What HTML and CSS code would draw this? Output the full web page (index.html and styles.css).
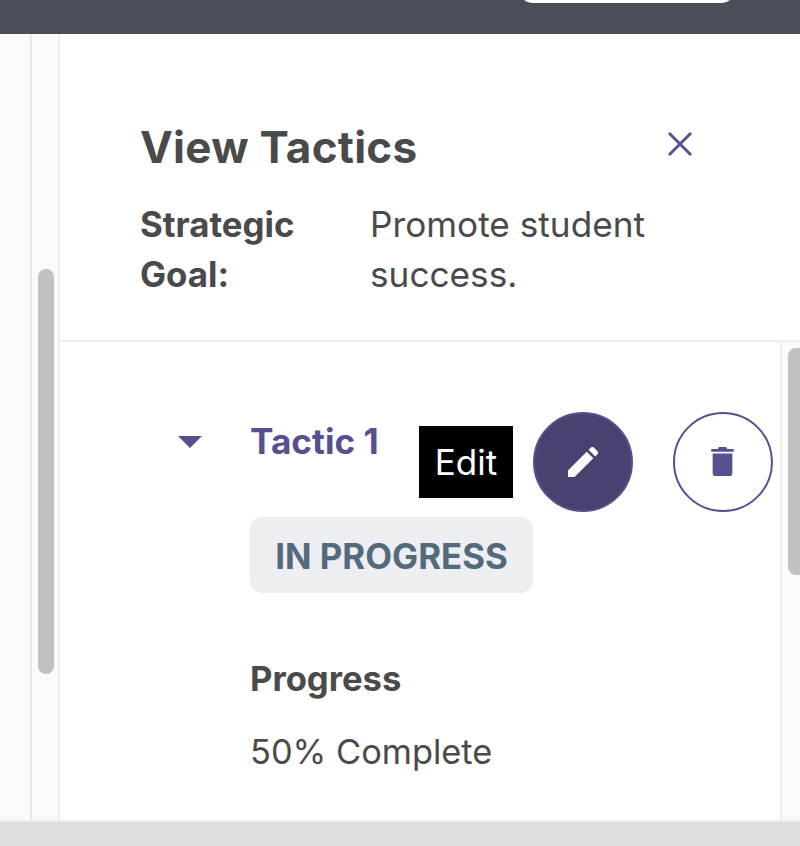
FILE: index.html
```html
<!DOCTYPE html>
<html lang="en">
<head>
<meta charset="UTF-8" />
<title>View Tactics</title>
<link rel="stylesheet" href="styles.css">
</head>
<body>
<div class="topbar"><div class="search"></div></div>
<div class="main">
    <div class="gutter"></div>
    <div class="track track-left"><div class="thumb thumb-left"></div></div>
    <div class="panel">
        <div class="panel-head">
            <div class="title-row">
                <h1>View Tactics</h1>
                <svg class="close" width="26" height="26" viewBox="0 0 26 26"><path d="M2 2 L24 24 M24 2 L2 24" /></svg>
            </div>
            <div class="goal">
                <b>Strategic Goal:</b>
                <span>Promote student success.</span>
            </div>
        </div>
        <div class="panel-body">
            <div class="content">
                <div class="tactic-row">
                    <div class="caret"></div>
                    <h2>Tactic 1</h2>
                    <div class="actions">
                        <button class="round solid">
                            <span class="tip">Edit</span>
                            <svg width="30" height="30" viewBox="0 0 32 32"><path d="M0 25 L20 5 L27 12 L7 32 L0 32 Z M22 3 L25 0 Q26 -0.500 27 0 L32 5 Q32.500 6 32 7 L29 10 Z" /></svg>
                        </button>
                        <button class="round outline">
                            <svg class="trash" width="23" height="30" viewBox="0 0 24 32"><path d="M8 0 H16 L17 2 H24 V5 H0 V2 H7 Z M1.500 7 H22.500 V28 Q22.500 31 19.500 31 H4.500 Q1.500 31 1.500 28 Z" /></svg>
                        </button>
                    </div>
                </div>
                <div class="status">IN PROGRESS</div>
                <h3>Progress</h3>
                <p>50% Complete</p>
            </div>
            <div class="track track-right"><div class="thumb thumb-right"></div></div>
        </div>
    </div>
</div>
<div class="bottombar"></div>
</body>
</html>
```
FILE: styles.css
```css
*{margin:0;padding:0;box-sizing:border-box;}
html,body{height:100%;}
body{display:flex;flex-direction:column;height:846px;overflow:hidden;font-family:Inter,"Liberation Sans",sans-serif;color:#4a4a4a;background:#fff;}
.topbar{height:34px;flex:none;background:#4a4e59;padding-left:520px;overflow:hidden;}
.search{width:214px;height:24px;margin-top:-21px;background:#fff;border-radius:12px;}
.main{flex:1;display:flex;min-height:0;}
.gutter{width:32px;flex:none;background:#fafafa;border-right:2px solid #e8e8e8;}
.track{background:#fafafa;flex:none;}
.track-left{width:28px;padding:235px 0 0 6px;border-right:2px solid #ededed;}
.thumb{background:#c1c1c1;border-radius:8px;}
.thumb-left{width:16px;height:405px;}
.panel{flex:1;display:flex;flex-direction:column;min-width:0;}
.panel-head{height:308px;flex:none;padding:86px 107px 0 81px;border-bottom:2px solid #eeeef2;}
.title-row{display:flex;justify-content:space-between;align-items:center;height:54px;}
h1{font-size:44px;font-weight:700;line-height:54px;letter-spacing:.25px;margin-left:-1px;}
.close{stroke:#55508f;stroke-width:3;fill:none;margin-top:-6px;}
.goal{display:grid;grid-template-columns:230px 1fr;margin-top:25px;font-size:35.2px;line-height:50px;margin-left:-1px;}
.goal b{width:190px;font-size:34.8px;}
.panel-body{flex:1;display:flex;min-height:0;}
.content{flex:1;border-right:2px solid #ededed;padding:70px 0 0 118px;min-width:0;}
.tactic-row{display:flex;height:100px;}
.caret{width:0;height:0;flex:none;margin:24px 0 0 0;border-left:12px solid transparent;border-right:12px solid transparent;border-top:12px solid #55508f;}
h2{font-size:35.2px;line-height:58px;color:#55508f;font-weight:700;margin-left:48px;width:153px;white-space:nowrap;}
.actions{display:flex;gap:40px;flex:none;margin-left:130px;}
.round{position:relative;width:100px;height:100px;border-radius:50%;border:2px solid #55508f;display:flex;align-items:center;justify-content:center;}
.solid{background:#47426f;fill:#fff;}
.outline{background:#fff;fill:#55508f;}
.trash{margin-left:-1px;}
.tip{position:absolute;right:118px;top:12px;width:94px;height:72px;background:#000;color:#fff;font:400 35px/72px Inter,"Liberation Sans",sans-serif;text-align:center;}
.status{width:283px;height:76px;margin:5px 0 0 72px;background:#eceef2;border-radius:12px;color:#546a7b;font-size:34.8px;font-weight:700;line-height:78px;text-align:center;white-space:nowrap;}
h3{font-size:34.6px;font-weight:700;line-height:50px;margin:60px 0 0 72px;}
.content p{font-size:34.4px;line-height:50px;margin:24px 0 0 72px;}
.track-right{width:18px;padding:6px 0 0 6px;}
.thumb-right{width:12px;height:227px;border-radius:8px 0 0 8px;}
.bottombar{height:26px;flex:none;background:#dedede;border-top:2px solid #ededf0;}
```
